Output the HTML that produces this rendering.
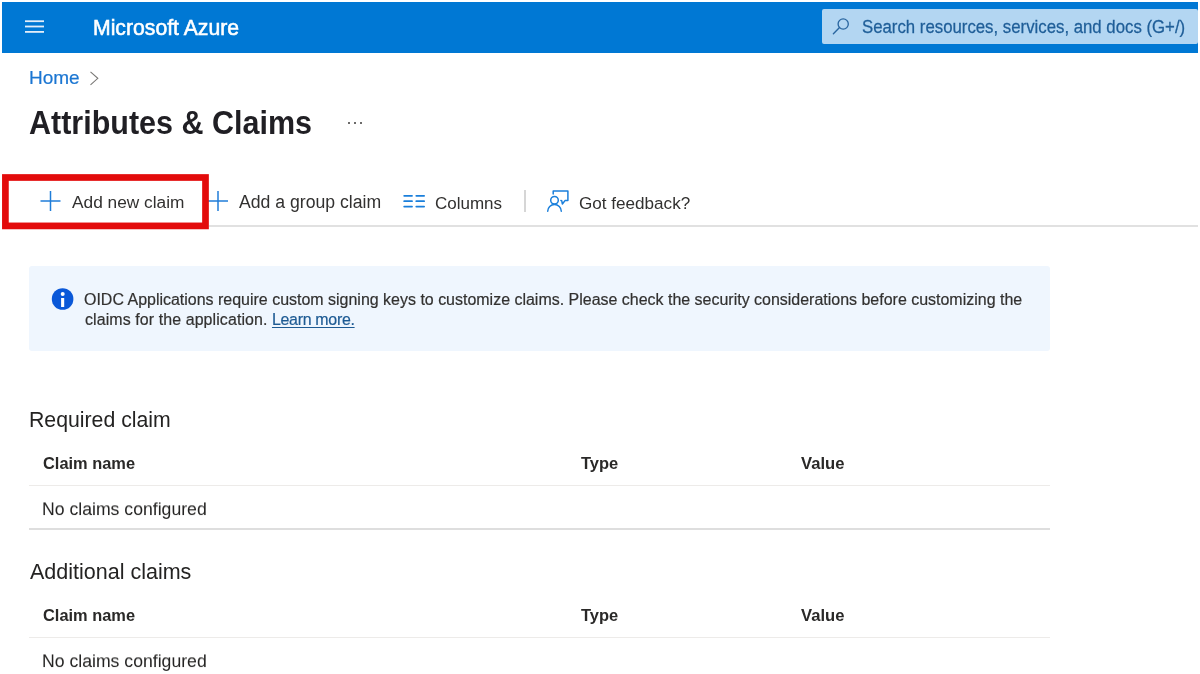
<!DOCTYPE html>
<html>
<head>
<meta charset="utf-8">
<style>
html,body{margin:0;padding:0;}
body{width:1200px;height:674px;overflow:hidden;background:#fff;position:relative;font-family:"Liberation Sans",sans-serif;}
.a{position:absolute;}
.t{position:absolute;line-height:1;white-space:nowrap;will-change:transform;transform-origin:0 85%;}
#bar{left:2px;top:2px;width:1196px;height:51px;background:#0078d4;}
.hb{position:absolute;left:25px;width:19px;height:1.8px;background:#dce9f6;}
#search{left:822px;top:9px;width:375.5px;height:35px;background:#b3d6f2;border-radius:2px;}
#toolline{left:209px;top:225px;width:989px;height:1.7px;background:#e1e1e1;}
#info{left:29px;top:266px;width:1021px;height:85px;background:#eff6fe;border-radius:3px;}
.tl{position:absolute;left:29px;width:1021px;height:1px;}
.dark{color:#323130;}
</style>
</head>
<body>
<!-- top bar -->
<div class="a" id="bar"></div>
<svg class="a" style="left:20px;top:15px" width="30" height="22" viewBox="0 0 30 22"><g stroke="#e3eef9" stroke-width="1.8"><line x1="5" y1="6.2" x2="24" y2="6.2"/><line x1="5" y1="11.5" x2="24" y2="11.5"/><line x1="5" y1="16.9" x2="24" y2="16.9"/></g></svg>
<div class="a" id="search"></div>
<svg class="a" style="left:828px;top:14px" width="24" height="24" viewBox="0 0 24 24">
  <circle cx="15.2" cy="10" r="5.1" fill="none" stroke="#2a66a0" stroke-width="1.35"/>
  <line x1="11.5" y1="13.6" x2="5.4" y2="19.8" stroke="#2a66a0" stroke-width="1.4" stroke-linecap="round"/>
</svg>

<!-- breadcrumb -->
<svg class="a" style="left:88px;top:70px" width="14" height="18" viewBox="0 0 14 18">
  <polyline points="2.5,1.8 9.8,8.3 2.5,14.8" fill="none" stroke="#7a7876" stroke-width="1.1"/>
</svg>

<!-- title -->
<div class="a" style="left:347.5px;top:122.4px;width:2px;height:2px;border-radius:1px;background:#3b3a39"></div>
<div class="a" style="left:353.5px;top:122.4px;width:2px;height:2px;border-radius:1px;background:#3b3a39"></div>
<div class="a" style="left:359.5px;top:122.4px;width:2px;height:2px;border-radius:1px;background:#3b3a39"></div>

<!-- toolbar -->
<div class="a" id="toolline"></div>
<svg class="a" style="left:40px;top:191px" width="22" height="21" viewBox="0 0 22 21">
  <line x1="0.5" y1="10" x2="20.5" y2="10" stroke="#1f7dd8" stroke-width="1.5"/>
  <line x1="10.5" y1="0" x2="10.5" y2="20" stroke="#1f7dd8" stroke-width="1.5"/>
</svg>
<svg class="a" style="left:208px;top:191px" width="22" height="21" viewBox="0 0 22 21">
  <line x1="0" y1="10" x2="20" y2="10" stroke="#1f7dd8" stroke-width="1.5"/>
  <line x1="10" y1="0" x2="10" y2="20" stroke="#1f7dd8" stroke-width="1.5"/>
</svg>
<svg class="a" style="left:402px;top:192px" width="26" height="18" viewBox="0 0 26 18">
  <g stroke="#1a7fdb" stroke-width="1.7" stroke-linecap="round">
  <line x1="2.15" y1="3.8" x2="10.05" y2="3.8"/><line x1="14.25" y1="3.8" x2="22.15" y2="3.8"/>
  <line x1="2.15" y1="9.2" x2="10.05" y2="9.2"/><line x1="14.25" y1="9.2" x2="22.15" y2="9.2"/>
  <line x1="2.15" y1="14.6" x2="10.05" y2="14.6"/><line x1="14.25" y1="14.6" x2="22.15" y2="14.6"/>
  </g>
</svg>
<div class="a" style="left:524.3px;top:190px;width:1.5px;height:22px;background:#d6d6d6"></div>
<svg class="a" style="left:545px;top:188px" width="26" height="26" viewBox="0 0 26 26">
  <g fill="none" stroke="#1a7fdb" stroke-width="1.5" stroke-linecap="round" stroke-linejoin="round">
    <polyline points="8.2,5.9 8.2,3.1 22.9,3.1 22.9,12.6 20.0,12.6 17.4,16.0 16.7,12.7 15.9,12.5"/>
    <circle cx="9.5" cy="12.2" r="3.8"/>
    <path d="M2.7,23.3 A6.8,6.8 0 0 1 16.3,23.3"/>
  </g>
</svg>

<svg class="a" style="left:0;top:170px" width="215" height="65" viewBox="0 170 215 65"><rect x="5.4" y="177.5" width="200.1" height="48.4" fill="none" stroke="#e30b0b" stroke-width="6.7"/></svg>

<!-- info -->
<div class="a" id="info"></div>
<svg class="a" style="left:51px;top:288px" width="23" height="23" viewBox="0 0 23 23">
  <circle cx="11.6" cy="11" r="10.8" fill="#0a58d8"/>
  <circle cx="11.7" cy="5.9" r="2" fill="#fff"/>
  <rect x="10.1" y="10" width="3.1" height="9" fill="#fff"/>
</svg>

<!-- required -->
<div class="tl" style="top:485px;background:#edebe9"></div>
<div class="tl" style="top:528px;height:2px;background:#dedede"></div>

<!-- additional -->
<div class="tl" style="top:637px;background:#edebe9"></div>

<div class="t" style="left:93.3px;top:17.35px;font-size:21.2px;color:#fff;-webkit-text-stroke:0.55px #fff;">Microsoft Azure</div>
<div class="t" style="left:862.3px;top:19.68px;font-size:16.8px;color:#1f5e98;transform:scaleY(1.05);-webkit-text-stroke:0.25px #1f5e98;">Search resources, services, and docs (G+/)</div>
<div class="t" style="left:28.8px;top:68.22px;font-size:19.0px;color:#1b76d2;-webkit-text-stroke:0.2px #1b76d2;">Home</div>
<div class="t" style="left:28.7px;top:107.98px;font-size:30.5px;color:#201f24;font-weight:bold;transform:scaleY(1.08);">Attributes &amp; Claims</div>
<div class="t" style="left:72px;top:194.36px;font-size:17.3px;color:#323130;">Add new claim</div>
<div class="t" style="left:239.1px;top:194.06px;font-size:17.65px;color:#323130;">Add a group claim</div>
<div class="t" style="left:435px;top:194.61px;font-size:17.0px;color:#323130;">Columns</div>
<div class="t" style="left:579.4px;top:194.52px;font-size:17.1px;color:#323130;">Got feedback?</div>
<div class="t" style="left:83.5px;top:292.37px;font-size:15.98px;color:#323130;-webkit-text-stroke:0.2px #323130;">OIDC Applications require custom signing keys to customize claims. Please check the security considerations before customizing the</div>
<div class="t" style="left:84.5px;top:312.20px;font-size:15.95px;color:#323130;-webkit-text-stroke:0.2px currentColor;"><span style="letter-spacing:0.1px">claims for the application.</span> <span style="color:#1d5a93;text-decoration:underline;letter-spacing:-0.3px;text-underline-offset:1.6px">Learn more.</span></div>
<div class="t" style="left:29.2px;top:410.21px;font-size:21.25px;color:#242322;">Required claim</div>
<div class="t" style="left:43px;top:454.82px;font-size:16.4px;color:#2a2928;font-weight:bold;transform:scaleY(1.03);">Claim name</div>
<div class="t" style="left:580.5px;top:454.73px;font-size:16.5px;color:#2a2928;font-weight:bold;transform:scaleY(1.03);">Type</div>
<div class="t" style="left:801px;top:455.65px;font-size:16.6px;color:#2a2928;font-weight:bold;transform:scaleY(1.03);">Value</div>
<div class="t" style="left:42.3px;top:500.66px;font-size:17.65px;color:#242322;transform:scaleY(0.97);">No claims configured</div>
<div class="t" style="left:29.5px;top:562.20px;font-size:21.5px;color:#242322;">Additional claims</div>
<div class="t" style="left:43px;top:607.32px;font-size:16.4px;color:#2a2928;font-weight:bold;transform:scaleY(1.03);">Claim name</div>
<div class="t" style="left:580.5px;top:607.23px;font-size:16.5px;color:#2a2928;font-weight:bold;transform:scaleY(1.03);">Type</div>
<div class="t" style="left:801px;top:608.15px;font-size:16.6px;color:#2a2928;font-weight:bold;transform:scaleY(1.03);">Value</div>
<div class="t" style="left:42.3px;top:653.16px;font-size:17.65px;color:#242322;transform:scaleY(0.97);">No claims configured</div>

</body>
</html>
